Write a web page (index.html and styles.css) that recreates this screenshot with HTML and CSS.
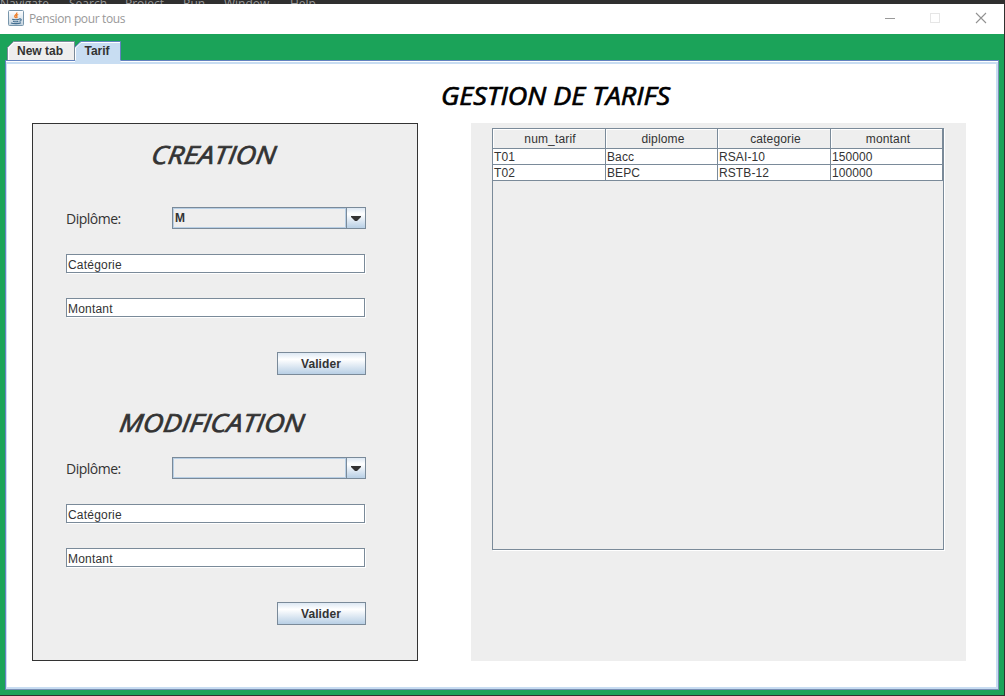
FILE: index.html
```html
<!DOCTYPE html>
<html lang="fr">
<head>
<meta charset="utf-8">
<title>Pension pour tous</title>
<link rel="stylesheet" href="styles.css">
</head>
<body>
<div class="menubar"><span class="m1">Navigate</span><span class="m2">Search</span><span class="m3">Project</span><span class="m4">Run</span><span class="m5">Window</span><span class="m6">Help</span></div>
<div class="window">
  <header class="titlebar">
    <svg class="java" width="16" height="16" viewBox="0 0 16 16">
      <defs><linearGradient id="jg" x2="0" y2="1"><stop offset="0" stop-color="#fff"/><stop offset="1" stop-color="#c3d3df"/></linearGradient></defs>
      <rect x=".5" y=".5" width="15" height="15" rx="1" fill="url(#jg)" stroke="#7896ac"/>
      <path d="M8.800 2.500c.6 2-2.600 2.300-2 4 .2.700.8 1 .9 1.600M10.200 4.500C8.200 5.200 8.400 6 8.900 6.600c.3.500.1 1-.4 1.500" fill="none" stroke="#ee7a22" stroke-width="1.300"/>
      <path d="M4.200 9.200c1.500.7 5.600.7 6.800 0M5 11.200c1.500.6 4 .6 5.300 0M3 13c2.500.9 8 .9 10-.3M11 9c3-.8 2.800 1.800.3 2.300" fill="none" stroke="#436f91" stroke-width="1.100"/>
    </svg>
    <span class="title">Pension pour tous</span>
    <svg class="controls" width="104" height="14" viewBox="0 0 104 14" fill="none">
      <path d="M0 6.500h10" stroke="#999"/>
      <rect x="45.500" y="1.500" width="9" height="9" stroke="#e6e6e6"/>
      <path d="M91 1l10 10M101 1L91 11" stroke="#929292" stroke-width="1.100"/>
    </svg>
  </header>
  <main class="content">
    <nav class="tabs">
      <div class="tab tab-new">
        <svg class="tab-shape" width="68" height="19"><path d="M.5 19V6.500L6.500.5H67.500V19" fill="#eee" stroke="#7a8a99"/><path d="M1.500 19V7L7 1.500H67" fill="none" stroke="#fff"/></svg>
        <span>New tab</span>
      </div>
      <div class="tab tab-active">
        <svg class="tab-shape" width="46" height="21"><path d="M0 21V6.500L6.500.5H45.500V21" fill="#c8ddf2"/><path d="M0 6L5.500.5H45.500V19" fill="none" stroke="#6382bf"/><path d="M.5 19V7L6 1.500H45" fill="none" stroke="#fff"/></svg>
        <span>Tarif</span>
      </div>
    </nav>
    <div class="frame">
      <h1><span>GESTION DE TARIFS</span></h1>
      <div class="columns">
        <section class="forms">
          <form class="form">
            <h2 class="creation"><span>CREATION</span></h2>
            <div class="line"><label>Diplôme:</label>
              <div class="combo"><div class="value">M</div><div class="arrow"><svg width="10" height="5"><path d="M0 0h10v1L6 5H4L0 1z" fill="#333"/></svg></div></div></div>
            <div class="field">Catégorie</div>
            <div class="field">Montant</div>
            <div class="button">Valider</div>
          </form>
          <form class="form second">
            <h2 class="modification"><span>MODIFICATION</span></h2>
            <div class="line"><label>Diplôme:</label>
              <div class="combo"><div class="value"></div><div class="arrow"><svg width="10" height="5"><path d="M0 0h10v1L6 5H4L0 1z" fill="#333"/></svg></div></div></div>
            <div class="field">Catégorie</div>
            <div class="field">Montant</div>
            <div class="button">Valider</div>
          </form>
        </section>
        <section class="list">
          <div class="scroll">
            <div class="row head"><div>num_tarif</div><div>diplome</div><div>categorie</div><div>montant</div></div>
            <div class="row"><div>T01</div><div>Bacc</div><div>RSAI-10</div><div>150000</div></div>
            <div class="row"><div>T02</div><div>BEPC</div><div>RSTB-12</div><div>100000</div></div>
          </div>
        </section>
      </div>
    </div>
  </main>
</div>
</body>
</html>
```
FILE: styles.css
```css
* { box-sizing: border-box; }
body { margin: 0; width: 1005px; height: 696px; overflow: hidden; background: #30302f; font: 12px/14px "Liberation Sans", Arial, sans-serif; color: #333; }
.menubar { height: 4px; overflow: hidden; background: #2f2f2f; color: #999; font: 12px/16px "Open Sans", sans-serif; display: flex; }
.menubar span { flex: none; margin-top: -4px; }
.m1 { width: 69px; }
.m2 { width: 56px; }
.m3 { width: 58px; }
.m4 { width: 41px; }
.m5 { width: 66px; }
.window { width: 1004px; height: 691px; }
.titlebar { height: 30px; background: #fff; display: flex; align-items: flex-start; padding: 6px 0 0 8px; }
.title { margin: 1px 0 0 5px; color: #999; font: 12px/16px "Open Sans", sans-serif; letter-spacing: -.36px; white-space: nowrap; width: 100px; }
.controls { margin: 2px 0 0 756px; }
.content { height: 661px; background: #1ba359; padding: 7px 5px 5px; }
.tabs { display: flex; height: 19px; padding-left: 2px; font-weight: bold; }
.tab { position: relative; height: 19px; text-align: center; }
.tab span { position: relative; display: block; line-height: 21px; }
.tab-shape { position: absolute; left: 0; top: 0; }
.tab-new { width: 68px; padding-right: 2px; }
.tab-active { width: 46px; height: 21px; z-index: 1; padding-right: 2px; }
.frame { width: 994px; height: 630px; background: #fff; border: 1px solid #7a8fb4; box-shadow: inset 0 1px #fff, inset 1px 0 #c8ddf2, inset 0 3px #c8ddf2, inset -2px -2px #c8ddf2; padding: 15px 0 0 26px; border-top-color: #6382bf; border-left-color: #6382bf; }
h1, h2 { font-family: "Open Sans", "Noto Sans", sans-serif; font-style: italic; font-weight: 400; margin: 0; white-space: nowrap; -webkit-text-stroke: .7px currentColor; }
h1 { height: 47px; padding-left: 409px; color: #000; font-size: 25px; line-height: 38px; }
h1 span, h2 span { display: inline-block; transform-origin: left center; }
h1 span { transform: scaleX(1.08); }
h2 span { transform: skewX(-8deg) scaleX(1.12); }
.columns { display: flex; gap: 53px; }
.forms { width: 386px; height: 538px; border: 1px solid #333; background: #eee; }
.form { height: 250px; padding: 0 51px 0 33px; }
.second { margin-top: 17px; }
h2 { height: 66px; padding-top: 11px; font-size: 25px; line-height: 38px; }
.creation { margin: 0 0 17px 86px; }
.second .modification { margin: 0 0 0 54px; padding-top: 12px; }
.line { display: flex; height: 22px; justify-content: space-between; margin-bottom: 25px; }
label { font: 14px/24px "Open Sans", sans-serif; letter-spacing: -.5px; }
.combo { width: 194px; height: 22px; border: 1px solid #7a8a99; display: flex; }
.value { flex: 1; border: 1px solid #b8cfe5; padding-left: 1px; line-height: 18px; font-weight: bold; }
.arrow { width: 19px; border-left: 1px solid #7a8a99; display: flex; align-items: center; justify-content: center; background: linear-gradient(#dde8f3, #fff 30%, #b8cfe5); }
.field { width: 299px; height: 19px; margin-bottom: 25px; border: 1px solid #7a8a99; background: #fff; box-shadow: 1px 1px #fff; padding: 2px 1px 0; line-height: 16px; letter-spacing: .2px; }
.button { margin: 35px 0 0 auto; padding-right: 1px; width: 89px; height: 23px; border: 1px solid #7a8a99; background: linear-gradient(#dde8f3, #fff 30%, #b8cfe5); text-align: center; font-weight: bold; line-height: 22px; letter-spacing: .1px; }
.list { width: 495px; height: 538px; background: #eee; padding: 5px 0 0 21px; }
.scroll { width: 452px; height: 422px; border: 1px solid #7a8a99; box-shadow: 1px 1px #fff; }
.row { display: grid; grid-template-columns: 113px 112px 113px 112px; grid-template-rows: 100%; height: 16px; background: #fff; }
.row div { border: solid #7a8a99; border-width: 0 1px 1px 0; padding-left: 1px; line-height: 16px; letter-spacing: .1px; }
.head { height: 20px; background: #eee; }
.row.head div { text-align: center; line-height: 21px; padding-left: 3px; box-shadow: inset 1px 1px #fff; letter-spacing: .15px; }
.row.head div:first-child { padding-left: 2px; }
```
